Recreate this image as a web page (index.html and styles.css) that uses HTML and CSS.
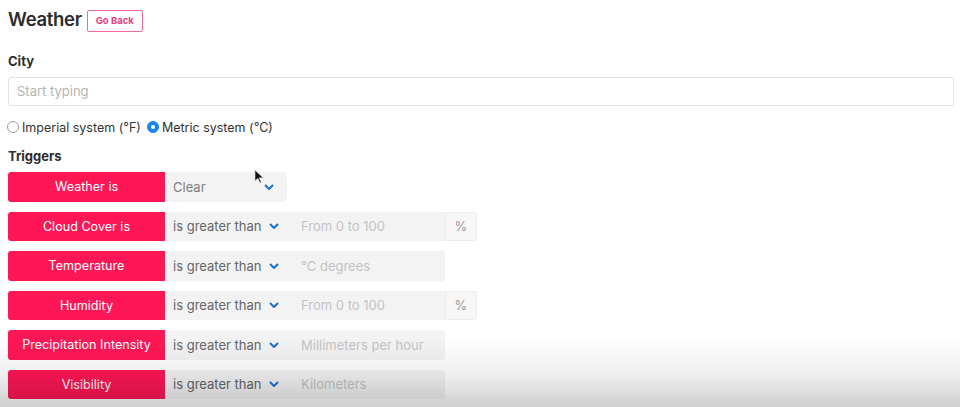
FILE: index.html
```html
<!DOCTYPE html>
<html lang="en">
<head>
<meta charset="utf-8">
<title>Weather</title>
<link rel="stylesheet" href="styles.css">
</head>
<body>
<div class="page">
  <header class="head">
    <h1 class="title">Weather</h1>
    <button class="back">Go Back</button>
  </header>

  <div class="label city-label">City</div>
  <div class="city-input">Start typing</div>

  <div class="units">
    <span class="radio"></span><span class="unit-text">Imperial system (°F)</span>
    <span class="radio on"></span><span class="unit-text">Metric system (°C)</span>
  </div>

  <div class="label trig-label">Triggers</div>

  <div class="triggers">
    <div class="row">
      <div class="tag">Weather is</div>
      <div class="select sel-wide"><span>Clear</span><svg class="chev" viewBox="0 0 10 6"><path d="M1 1l4 4 4-4"/></svg></div>
    </div>
    <div class="row">
      <div class="tag">Cloud Cover is</div>
      <div class="select"><span>is greater than</span><svg class="chev" viewBox="0 0 10 6"><path d="M1 1l4 4 4-4"/></svg></div>
      <div class="field">From 0 to 100</div>
      <div class="addon">%</div>
    </div>
    <div class="row">
      <div class="tag">Temperature</div>
      <div class="select"><span>is greater than</span><svg class="chev" viewBox="0 0 10 6"><path d="M1 1l4 4 4-4"/></svg></div>
      <div class="field end">°C degrees</div>
    </div>
    <div class="row">
      <div class="tag">Humidity</div>
      <div class="select"><span>is greater than</span><svg class="chev" viewBox="0 0 10 6"><path d="M1 1l4 4 4-4"/></svg></div>
      <div class="field">From 0 to 100</div>
      <div class="addon">%</div>
    </div>
    <div class="row">
      <div class="tag">Precipitation Intensity</div>
      <div class="select"><span>is greater than</span><svg class="chev" viewBox="0 0 10 6"><path d="M1 1l4 4 4-4"/></svg></div>
      <div class="field end">Millimeters per hour</div>
    </div>
    <div class="row">
      <div class="tag">Visibility</div>
      <div class="select"><span>is greater than</span><svg class="chev" viewBox="0 0 10 6"><path d="M1 1l4 4 4-4"/></svg></div>
      <div class="field end">Kilometers</div>
    </div>
  </div>
</div>

<svg class="cursor" viewBox="0 0 12 18" width="10" height="15"><path d="M1 1v14l3.5-3.5 2.5 5.5 2-1-2.5-5.3h5z" fill="#111" stroke="#fff" stroke-width="1"/></svg>
<div class="shade"></div>
</body>
</html>
```

FILE: styles.css
```css
html, body {
  margin: 0;
  padding: 0;
  background: #fff;
  overflow: hidden;
}
body {
  font-family: Inter, "Noto Sans", "Liberation Sans", sans-serif;
  color: #333;
  width: 960px;
  height: 407px;
  position: relative;
}
.page {
  padding: 8px 6px 0 8px;
}
.head {
  display: flex;
  align-items: center;
  height: 23px;
}
.title {
  margin: 0;
  font-size: 18.5px;
  font-weight: 600;
  color: #2b2b2b;
  letter-spacing: -0.3px;
  line-height: 23px;
}
.back {
  margin-left: 5px;
  height: 22px;
  width: 56px;
  padding: 0;
  border: 1px solid #f2689a;
  border-radius: 2px;
  background: #fff;
  color: #ee3e7c;
  font-family: inherit;
  font-size: 9.5px;
  font-weight: 700;
  margin-top: 2px;
}
.label {
  font-size: 13px;
  font-weight: 700;
  color: #2e2e2e;
  line-height: 16px;
}
.city-label {
  margin-top: 22px;
}
.city-input {
  margin-top: 8px;
  height: 27px;
  border: 1px solid #e2e2e2;
  border-radius: 3px;
  box-sizing: content-box;
  padding-left: 8px;
  font-size: 13px;
  line-height: 27px;
  color: #b4b4b4;
}
.units {
  margin-top: 13px;
  display: flex;
  align-items: center;
  height: 16px;
  font-size: 12.5px;
  color: #333;
  margin-left: -1px;
}
.radio {
  width: 10px;
  height: 10px;
  border: 1px solid #9a9a9a;
  border-radius: 50%;
  box-sizing: content-box;
  margin-right: 3px;
}
.radio.on {
  border-color: #1a84f0;
  background: #1a84f0;
  position: relative;
  margin-left: 6px;
}
.radio.on::after {
  content: "";
  position: absolute;
  left: 3px;
  top: 3px;
  width: 4px;
  height: 4px;
  border-radius: 50%;
  background: #fff;
}
.trig-label {
  margin-top: 13px;
}
.triggers {
  margin-top: 8px;
  display: flex;
  flex-direction: column;
  gap: 10px;
}
.row {
  display: flex;
  height: 29.5px;
}
.tag {
  width: 157px;
  flex: none;
  background: #ff1655;
  color: #fff;
  border-radius: 3px 0 0 3px;
  font-size: 12.6px;
  display: flex;
  align-items: center;
  justify-content: center;
}
.select {
  width: 122px;
  flex: none;
  background: #f3f3f4;
  display: flex;
  align-items: center;
  padding-left: 8px;
  box-sizing: border-box;
  font-size: 13px;
  color: #666;
}
.select span {
  flex: 1;
}
.sel-wide {
  border-radius: 0 3px 3px 0;
  color: #808080;
}
.sel-wide .chev {
  margin-right: 13px;
}
.chev {
  width: 10px;
  height: 6px;
  fill: none;
  stroke: #1b6fd6;
  stroke-width: 2;
  margin-right: 8px;
  flex: none;
}
.field {
  width: 158px;
  flex: none;
  background: #f3f3f4;
  padding-left: 14px;
  box-sizing: border-box;
  font-size: 13px;
  color: #c3c3c3;
  display: flex;
  align-items: center;
  white-space: nowrap;
}
.field.end {
  border-radius: 0 3px 3px 0;
}
.addon {
  width: 32px;
  flex: none;
  box-sizing: border-box;
  border: 1px solid #ebebeb;
  border-radius: 0 3px 3px 0;
  background: #f7f7f7;
  color: #999;
  font-size: 13px;
  display: flex;
  align-items: center;
  justify-content: center;
}
.cursor {
  position: absolute;
  left: 254px;
  top: 169px;
}
.shade {
  position: absolute;
  left: 0;
  right: 0;
  bottom: 0;
  height: 70px;
  background: linear-gradient(to bottom, rgba(0,0,0,0), rgba(0,0,0,0.06) 50%, rgba(0,0,0,0.19));
  pointer-events: none;
}
```
